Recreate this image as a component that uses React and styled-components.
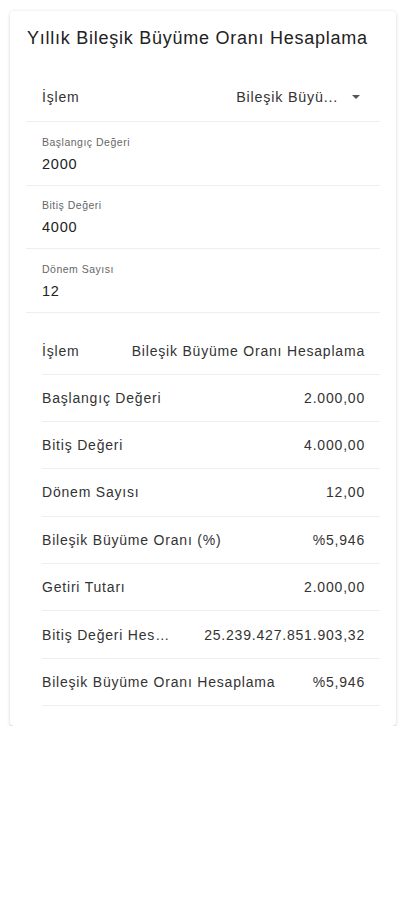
import React from "react";
import styled, { createGlobalStyle } from "styled-components";

const Global = createGlobalStyle`
  html, body { margin: 0; padding: 0; background: #fff; }
  body { font-family: "Liberation Sans", Arial, sans-serif; -webkit-font-smoothing: antialiased; }
  * { box-sizing: border-box; }
`;

const Card = styled.div`
  margin: 11px 10px 0 10px;
  width: 386px;
  background: #fff;
  border-radius: 4px;
  box-shadow: 0 2px 2px -1px rgba(0,0,0,0.25), 0 1px 4px 0 rgba(0,0,0,0.10), 0 0 3px 0 rgba(0,0,0,0.06);
  padding: 0 16px 20px 16px;
  letter-spacing: 0.8px;
`;

const Title = styled.h1`
  margin: 0;
  height: 55px;
  display: flex;
  align-items: center;
  padding: 0 0 0 1px;
  font-size: 18px;
  font-weight: 400;
  color: #222;
  letter-spacing: 0.75px;
`;

const FormList = styled.div`
  display: flex;
  flex-direction: column;
`;

const SelectRow = styled.div`
  height: 56px;
  padding: 7px 20px 0 16px;
  display: flex;
  align-items: center;
  justify-content: space-between;
  border-bottom: 1px solid #eeeeee;
  font-size: 14px;
  color: #333;
`;

const SelectValue = styled.div`
  display: flex;
  align-items: center;
  gap: 14px;
  color: #333;
  font-size: 14.3px;
`;

const InputRow = styled.div`
  height: 63.5px;
  display: flex;
  flex-direction: column;
  justify-content: center;
  padding: 2px 16px 0 16px;
  border-bottom: 1px solid #eeeeee;
`;

const InputLabel = styled.div`
  font-size: 10.5px;
  color: #666;
  line-height: 13px;
  margin-bottom: 6px;
  letter-spacing: 0.5px;
`;

const InputValue = styled.div`
  font-size: 14.5px;
  color: #222;
  line-height: 18px;
`;

const Results = styled.div`
  margin-top: 16px;
  margin-left: 16px;
  display: flex;
  flex-direction: column;
`;

const ResultRow = styled.div`
  height: ${p => (p.$first ? "46px" : "47.4px")};
  display: flex;
  align-items: center;
  justify-content: space-between;
  gap: 28px;
  padding-right: 15px;
  border-bottom: 1px solid #eeeeee;
  font-size: 14px;
  color: #333;
`;

const Key = styled.span`
  flex: ${p => (p.$shrink ? "0 1 auto" : "0 0 auto")};
  white-space: nowrap;
  overflow: hidden;
  text-overflow: ellipsis;
  min-width: 0;
`;

const Val = styled.span`
  white-space: nowrap;
  text-align: right;
  flex: 0 0 auto;
`;

const Arrow = () => (
  <svg width="8" height="4" viewBox="0 0 8 4" aria-hidden="true">
    <path d="M0 0 L4 4 L8 0 Z" fill="#555" />
  </svg>
);

const inputs = [
  ["Başlangıç Değeri", "2000"],
  ["Bitiş Değeri", "4000"],
  ["Dönem Sayısı", "12"],
];

const results = [
  ["İşlem", "Bileşik Büyüme Oranı Hesaplama"],
  ["Başlangıç Değeri", "2.000,00"],
  ["Bitiş Değeri", "4.000,00"],
  ["Dönem Sayısı", "12,00"],
  ["Bileşik Büyüme Oranı (%)", "%5,946"],
  ["Getiri Tutarı", "2.000,00"],
  ["Bitiş Değeri Hesaplama", "25.239.427.851.903,32", true],
  ["Bileşik Büyüme Oranı Hesaplama", "%5,946"],
];

export default function App() {
  return (
    <>
      <Global />
      <Card>
        <Title>Yıllık Bileşik Büyüme Oranı Hesaplama</Title>
        <FormList>
          <SelectRow>
            <span>İşlem</span>
            <SelectValue>
              <span>Bileşik Büyü...</span>
              <Arrow />
            </SelectValue>
          </SelectRow>
          {inputs.map(([l, v]) => (
            <InputRow key={l}>
              <InputLabel>{l}</InputLabel>
              <InputValue>{v}</InputValue>
            </InputRow>
          ))}
        </FormList>
        <Results>
          {results.map(([k, v, shrink], i) => (
            <ResultRow key={k} $first={i === 0}>
              <Key $shrink={shrink}>{k}</Key>
              <Val>{v}</Val>
            </ResultRow>
          ))}
        </Results>
      </Card>
    </>
  );
}
